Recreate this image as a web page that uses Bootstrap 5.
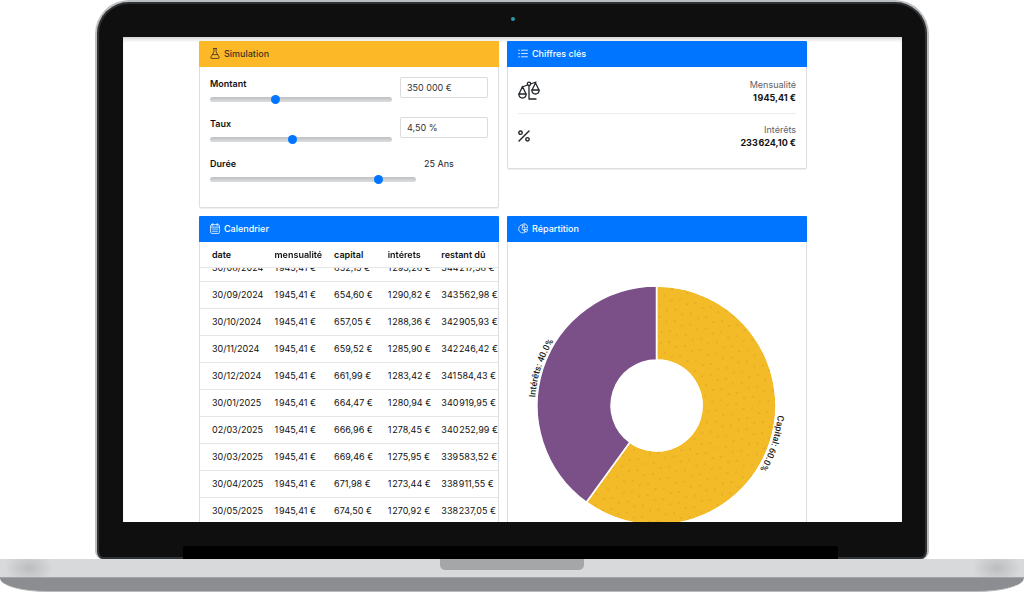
<!DOCTYPE html>
<html lang="fr">
<head>
<meta charset="utf-8">
<meta name="viewport" content="width=device-width, initial-scale=1">
<title>Simulation de prêt</title>
<link rel="stylesheet" href="https://cdn.jsdelivr.net/npm/bootstrap@5.3.0/dist/css/bootstrap.min.css">
<style>
  body { font-family: Inter, "Liberation Sans", sans-serif; font-size: 9px; line-height: 13px; color: #212529; background: #fff; }

  /* laptop */
  .lid { margin: 0 95px; padding: 0 25px 0 26px; background: #0f0f0f; border: 2px solid #bcbdbf; border-bottom: 0; border-radius: 34px 34px 8px 8px; box-shadow: inset 0 0 0 2px #2e3234; min-height: 0; }
  .bezel { height: 35px; }
  .camera { width: 4px; height: 4px; border-radius: 50%; background: #2a9aa8; }
  .screen { min-height: 0; overflow: hidden; background: #fff; box-shadow: inset 0 4px 4px -2px #ccc; padding: 4px 95px 0 76px; }
  .chin { height: 37px; padding: 0 64px 0 60px; }
  .hinge { height: 13px; background: #000; border-radius: 2px 2px 0 0; }
  .deck { height: 18px; background:
      radial-gradient(ellipse 24px 16px at 29px 9px, #bcbdbf, transparent),
      radial-gradient(ellipse 24px 16px at calc(100% - 27px) 9px, #bcbdbf, transparent), #d8d9db; }
  .notch { width: 144px; height: 11px; background: #a5a6a8; border-radius: 0 0 5px 5px; }
  .foot { height: 15px; background: #8c8d91; border-bottom: 1px solid #b9babd; border-top: 1px solid #a2a3a6; border-radius: 0 0 48px 48px / 0 0 14px 14px; }

  /* panels */
  .panel { border-color: #dcdee0; border-radius: 2px; box-shadow: 0 1px 1px #0001; --bs-card-inner-border-radius: 1px; }
  .panel .card-body { padding: 10px; }
  .panel-head { height: 26px; margin: -1px -1px 0; padding: 0 11px; border: 0; border-radius: 2px 2px 0 0; background: #0075ff; color: #fff; font-size: 9px; font-weight: 500; line-height: 26px; gap: 4px; }
  .panel-head.sun { background: #fdb827; color: #3a3320; font-weight: 500; }
  .panel-head svg { width: 10px; height: 11px; }
  .ico { fill: none; stroke: currentColor; stroke-linecap: round; stroke-linejoin: round; }

  /* form */
  .setting { height: 40px; gap: 8px; }
  .setting label { display: block; font-weight: 600; line-height: 14px; color: #111; }
  .setting .form-control { width: 88px; height: 21px; padding: 0 6px; font-size: 9px; line-height: 19px; border-color: #d9dbde; border-radius: 2px; color: #333; }
  .years { width: 64px; line-height: 14px; }
  .setting .form-range { display: block; height: 10px; margin-top: 4px; }
  .form-range::-webkit-slider-runnable-track { height: 5px; background: linear-gradient(#bfc0c2, #dcdddf); border-radius: 3px; }
  .form-range::-webkit-slider-thumb { width: 9px; height: 9px; margin-top: -2px; background: #0075ff; }
  .form-range::-moz-range-track { height: 5px; background: #c9cacc; }
  .form-range::-moz-range-thumb { width: 9px; height: 9px; background: #0075ff; }

  /* key figures */
  .figures .figure-row { padding: 9px 0; }
  .figures .figure-row:first-child { padding-top: 1px; }
  .figures .figure-row + .figure-row { border-top: 1px solid #eceded; }
  .figure-name { color: #5c6166; }
  .figure-value { font-weight: 700; color: #111; }

  /* schedule */
  .schedule { height: 283px; overflow: auto; scrollbar-width: none; }
  .schedule::-webkit-scrollbar { display: none; }
  .schedule table { table-layout: fixed; border-collapse: separate; border-spacing: 0; }
  .schedule th, .schedule td { height: 27px; padding: 0; border-bottom: 1px solid #e4e6e8; white-space: nowrap; vertical-align: middle; color: #111; }
  .schedule th { height: 26px; position: sticky; top: 0; background: #fff; font-weight: 600; }
  .schedule th:first-child, .schedule td:first-child { padding-left: 12px; }
  .donut { width: 100%; height: auto; }
  .donut text { font-family: Roboto, sans-serif; font-size: 9px; font-weight: 500; fill: #222; }
</style>
</head>
<body class="d-flex flex-column vh-100 overflow-hidden">
<div class="lid d-flex flex-column flex-grow-1">
  <div class="bezel d-flex align-items-center justify-content-center"><span class="camera"></span></div>
  <main class="screen flex-grow-1">
    <div class="row row-cols-2 g-2 align-items-start">
      <div class="col">
        <section class="panel card">
          <h2 class="panel-head sun card-header d-flex align-items-center">
            <svg class="ico" viewBox="0 0 18 20" stroke-width="1.5"><path d="M6 1h6M7 1v6L1.500 16.500Q0.500 19 3 19h12q2.500 0 1.500-2.500L11 7V1M4.500 12h9"/></svg>Simulation</h2>
          <form class="card-body">
            <div class="setting d-flex">
              <div class="flex-grow-1"><label for="amount">Montant</label><input id="amount" type="range" class="form-range" min="0" max="1000000" step="1000" value="350000"></div>
              <input class="form-control" type="text" value="350 000 €" aria-label="Montant">
            </div>
            <div class="setting d-flex">
              <div class="flex-grow-1"><label for="rate">Taux</label><input id="rate" type="range" class="form-range" min="0" max="10" step="0.05" value="4.5"></div>
              <input class="form-control" type="text" value="4,50 %" aria-label="Taux">
            </div>
            <div class="setting d-flex">
              <div class="flex-grow-1"><label for="years">Durée</label><input id="years" type="range" class="form-range" min="0" max="30" value="25"></div>
              <output class="years" for="years">25 Ans</output>
            </div>
          </form>
        </section>
      </div>
      <div class="col">
        <section class="panel card">
          <h2 class="panel-head card-header d-flex align-items-center">
            <svg class="ico" viewBox="0 0 18 20" stroke-width="1.5"><path d="M6 4h11M6 10h11M6 16h11M1 4h1.500M1 10h1.500M1 16h1.500"/></svg>Chiffres clés</h2>
          <div class="card-body figures">
            <div class="figure-row d-flex justify-content-between align-items-center">
              <svg class="ico" width="22" height="20" viewBox="0 0 22 20" stroke-width="1.3"><path d="M4 6l14-5M11 4.500V18h7M1 13l3.500-7.500L8 13M14 9l3.500-7L21 9M.7 13h7.600q-.5 4-3.800 4t-3.800-4zM13.700 9h7.600q-.5 4-3.800 4t-3.800-4z"/><circle cx="11" cy="2.800" r="1.700" fill="#fff"/></svg>
              <div class="text-end"><div class="figure-name">Mensualité</div><div class="figure-value">1&#8202;945,41 €</div></div>
            </div>
            <div class="figure-row d-flex justify-content-between align-items-center">
              <svg class="ico" width="12" height="12" viewBox="0 0 12 12" stroke-width="1.4"><path d="M11 1L1 11"/><circle cx="2.500" cy="2.700" r="1.700"/><circle cx="9.500" cy="9.300" r="1.700"/></svg>
              <div class="text-end"><div class="figure-name">Intérêts</div><div class="figure-value">233&#8202;624,10 €</div></div>
            </div>
          </div>
        </section>
      </div>
      <div class="col">
        <section class="panel card">
          <h2 class="panel-head card-header d-flex align-items-center">
            <svg class="ico" viewBox="0 0 18 20" stroke-width="1.4"><rect x="1" y="3" width="16" height="16" rx="2"/><path d="M5 .8V5M13 .8V5M1 7.500h16M4.500 11h2M8 11h2M11.500 11h2M4.500 15h2M8 15h2M11.500 15h2"/></svg>Calendrier</h2>
          <div class="schedule" id="schedule">
            <table class="w-100">
              <colgroup><col style="width:25%"><col style="width:20%"><col style="width:18%"><col style="width:18%"><col style="width:19%"></colgroup>
              <thead><tr><th>date</th><th>mensualité</th><th>capital</th><th>intérets</th><th>restant dû</th></tr></thead>
              <tbody>
                <tr><td>30/08/2024</td><td>1&#8202;945,41 €</td><td>652,15 €</td><td>1&#8202;293,26 €</td><td>344&#8202;217,58 €</td></tr>
                <tr><td>30/09/2024</td><td>1&#8202;945,41 €</td><td>654,60 €</td><td>1&#8202;290,82 €</td><td>343&#8202;562,98 €</td></tr>
                <tr><td>30/10/2024</td><td>1&#8202;945,41 €</td><td>657,05 €</td><td>1&#8202;288,36 €</td><td>342&#8202;905,93 €</td></tr>
                <tr><td>30/11/2024</td><td>1&#8202;945,41 €</td><td>659,52 €</td><td>1&#8202;285,90 €</td><td>342&#8202;246,42 €</td></tr>
                <tr><td>30/12/2024</td><td>1&#8202;945,41 €</td><td>661,99 €</td><td>1&#8202;283,42 €</td><td>341&#8202;584,43 €</td></tr>
                <tr><td>30/01/2025</td><td>1&#8202;945,41 €</td><td>664,47 €</td><td>1&#8202;280,94 €</td><td>340&#8202;919,95 €</td></tr>
                <tr><td>02/03/2025</td><td>1&#8202;945,41 €</td><td>666,96 €</td><td>1&#8202;278,45 €</td><td>340&#8202;252,99 €</td></tr>
                <tr><td>30/03/2025</td><td>1&#8202;945,41 €</td><td>669,46 €</td><td>1&#8202;275,95 €</td><td>339&#8202;583,52 €</td></tr>
                <tr><td>30/04/2025</td><td>1&#8202;945,41 €</td><td>671,98 €</td><td>1&#8202;273,44 €</td><td>338&#8202;911,55 €</td></tr>
                <tr><td>30/05/2025</td><td>1&#8202;945,41 €</td><td>674,50 €</td><td>1&#8202;270,92 €</td><td>338&#8202;237,05 €</td></tr>
              </tbody>
            </table>
          </div>
        </section>
      </div>
      <div class="col">
        <section class="panel card">
          <h2 class="panel-head card-header d-flex align-items-center">
            <svg class="ico" viewBox="0 0 18 20" stroke-width="1.400"><path d="M8 3a7.500 7.500 0 1 0 5 13.500L8 11zM11 1.500V9h6.500A7 7 0 0 0 11 1.500zM11 12h6.500q-.3 2.500-2 4.300z"/></svg>Répartition</h2>
          <svg class="donut" viewBox="0 1 298 283" role="img" aria-label="Répartition">
            <defs>
              <pattern id="dots" width="16" height="22" patternUnits="userSpaceOnUse" patternTransform="rotate(14)"><circle cx="3" cy="4" r=".5" fill="#a07a20"/><circle cx="11" cy="7" r=".5" fill="#a07a20"/><circle cx="5" cy="15" r=".5" fill="#a07a20"/><circle cx="13" cy="18" r=".5" fill="#a07a20"/></pattern>
              <path id="arc" d="M27 164.500a121.500 121.500 0 0 1 243 0a121.500 121.500 0 0 1-121.500 121.500"/>
            </defs>
            <g stroke="#fff" stroke-width="1.500">
              <path fill="#f4bb29" d="M148.500 45a119.500 119.500 0 1 1-70.200 216.200l43.500-60a45.500 45.500 0 1 0 26.700-82.300z"/>
              <path fill="url(#dots)" d="M148.500 45a119.500 119.500 0 1 1-70.200 216.200l43.500-60a45.500 45.500 0 1 0 26.700-82.300z"/>
              <path fill="#7b4f87" d="M148.500 45a119.500 119.500 0 0 0-70.200 216.200l43.500-60a45.500 45.500 0 0 1 26.700-82.300z"/>
            </g>
            <text text-anchor="middle"><textPath href="#arc" startOffset="38">Intérêts: 40.0%</textPath></text>
            <text text-anchor="middle"><textPath href="#arc" startOffset="420">Capital: 60.0%</textPath></text>
          </svg>
        </section>
      </div>
    </div>
  </main>
  <div class="chin d-flex flex-column justify-content-end"><div class="hinge"></div></div>
</div>
<div class="deck"><div class="notch mx-auto"></div></div>
<div class="foot"></div>
<script src="https://cdn.jsdelivr.net/npm/bootstrap@5.3.0/dist/js/bootstrap.bundle.min.js"></script>
<script>document.getElementById('schedule').scrollTop = 13;</script>
</body>
</html>
